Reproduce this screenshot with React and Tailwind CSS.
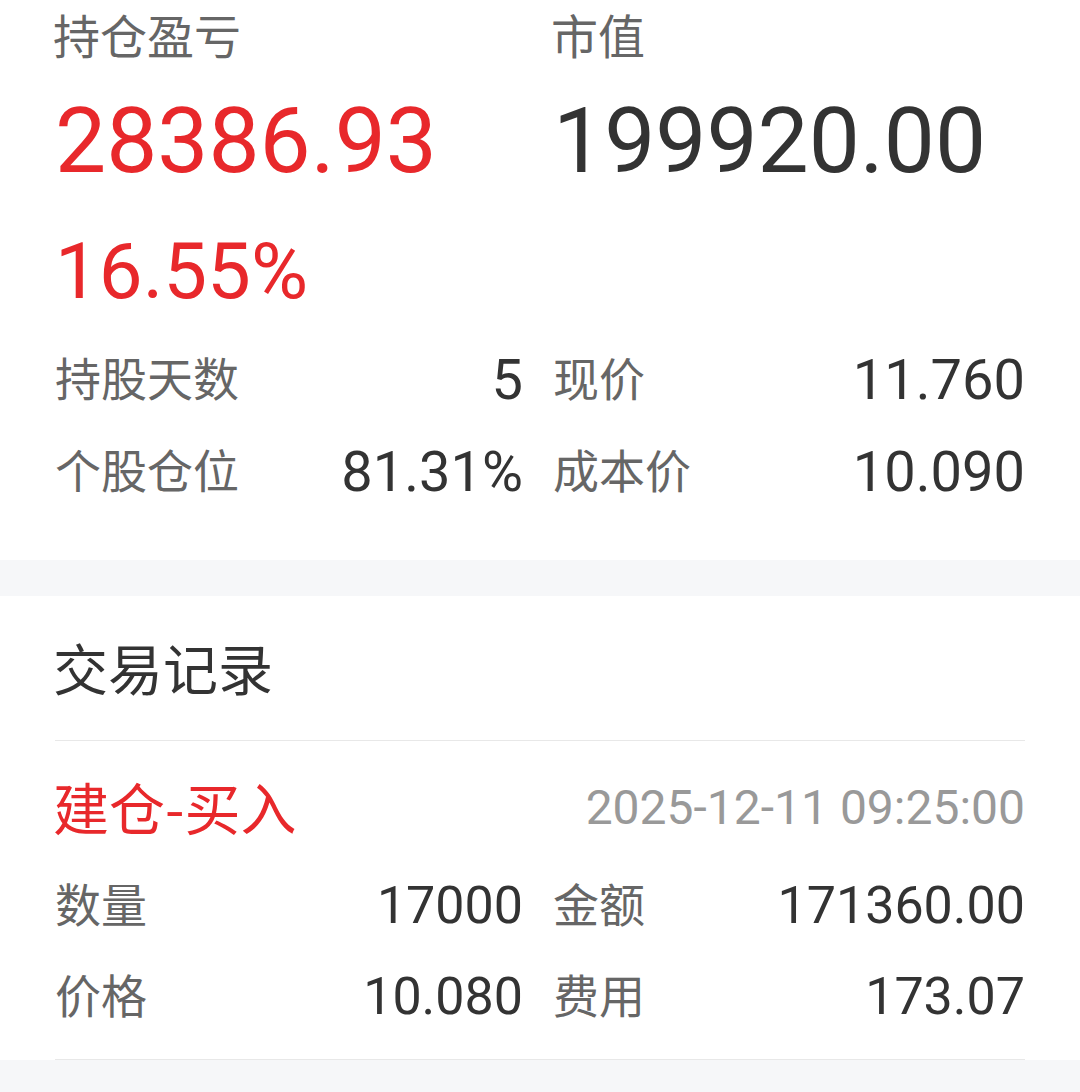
import React from "react";

const font = { fontFamily: 'Roboto, "Noto Sans CJK SC", sans-serif' };
const cjk = { fontFamily: '"Noto Sans CJK SC", sans-serif' };

function Pair({ label, value, size }) {
  return (
    <div className="flex items-center justify-between leading-none">
      <span className="text-[46px] text-[#666666]">{label}</span>
      <span className={`${size} text-[#333333]`}>{value}</span>
    </div>
  );
}

function Row({ h, size, left, right }) {
  return (
    <div className={`grid grid-cols-[468px_1fr] gap-x-[30px] px-[55px] ${h}`}>
      <Pair label={left[0]} value={left[1]} size={size} />
      <Pair label={right[0]} value={right[1]} size={size} />
    </div>
  );
}

export default function App() {
  return (
    <div className="w-[1080px] h-[1092px] bg-[#f6f7f9] overflow-hidden" style={font}>
      <div className="bg-white">
        <div className="grid grid-cols-[468px_1fr] gap-x-[30px] pl-[53px] pr-[55px] h-[74px] items-center leading-none">
          <div className="text-[47px] text-[#666666]">持仓盈亏</div>
          <div className="text-[47px] text-[#666666]">市值</div>
        </div>
        <div className="grid grid-cols-[468px_1fr] gap-x-[30px] px-[55px] h-[135px] items-center leading-none">
          <div className="text-[91px] text-[#e8282b]">28386.93</div>
          <div className="text-[91px] text-[#333333]">199920.00</div>
        </div>
        <div className="flex px-[55px] h-[125px] items-center leading-none">
          <div className="text-[78px] text-[#e8282b]">16.55%</div>
        </div>
        <Row h="h-[92px]" size="text-[56px]" left={["持股天数", "5"]} right={["现价", "11.760"]} />
        <Row h="h-[92px]" size="text-[56px]" left={["个股仓位", "81.31%"]} right={["成本价", "10.090"]} />
        <div className="h-[42px]" />
      </div>
      <div className="h-[36px]" />
      <div className="bg-white">
        <div className="h-[144px] pt-[6px] pl-[53px] pr-[55px] flex items-center leading-none">
          <span className="text-[55px] text-[#333333]">交易记录</span>
        </div>
        <div className="mx-[55px] border-t border-[#e8e8e8]" />
        <div className="pl-[53px] pr-[55px]">
          <div className="h-[119px] pt-[15px] flex items-center justify-between leading-none">
            <span className="text-[56px] text-[#e8282b]">
              建仓<span style={cjk}>-</span>买入
            </span>
            <span className="text-[48px] text-[#999999]">2025-12-11 09:25:00</span>
          </div>
        </div>
        <Row h="h-[92px]" size="text-[52px]" left={["数量", "17000"]} right={["金额", "171360.00"]} />
        <Row h="h-[90px]" size="text-[52px]" left={["价格", "10.080"]} right={["费用", "173.07"]} />
        <div className="h-[17px]" />
        <div className="mx-[55px] border-t border-[#e8e8e8]" />
      </div>
    </div>
  );
}
